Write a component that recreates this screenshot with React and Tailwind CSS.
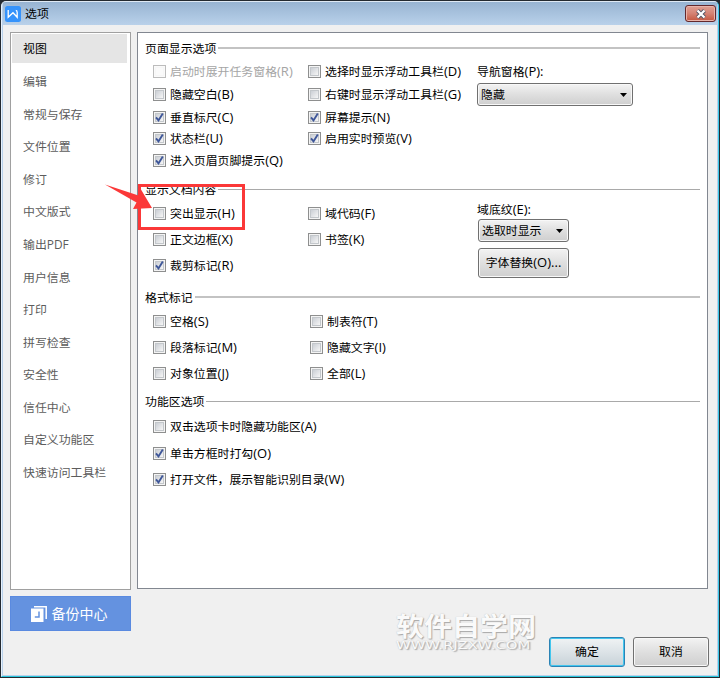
import React, { useState } from "react";

const MENU = [
    "视图", "编辑", "常规与保存", "文件位置", "修订", "中文版式", "输出PDF",
    "用户信息", "打印", "拼写检查", "安全性", "信任中心", "自定义功能区", "快速访问工具栏",
];

// splits "隐藏空白(B)" so the hotkey part can be a bit wider than the chinese text
function Label({ text }) {
    const i = text.indexOf("(");
    if (i < 0) return <span>{text}</span>;
    return (
        <span>
            {text.slice(0, i)}
            <span className="text-[13px]">{text.slice(i)}</span>
        </span>
    );
}

function Check({ text, on = false, disabled = false, className = "h-[26px]" }) {
    const [checked, setChecked] = useState(on);

    return (
        <div
            onClick={() => !disabled && setChecked(!checked)}
            className={`flex items-start gap-[4px] whitespace-nowrap ${disabled ? "text-[#a5a5a5]" : ""} ${className}`}
        >
            <span
                className={`w-[13px] h-[13px] shrink-0 border p-px ${disabled ? "border-[#bcbcbc] bg-[#fafafa]" : "border-[#8e8f8f] bg-[#f4f4f4]"}`}
            >
                <span
                    className={`block w-[9px] h-[9px] border ${disabled ? "border-[#f6f6f6]" : "border-[#c3c7cb] bg-linear-to-br from-[#cbcfd5] to-[#f6f6f6]"}`}
                >
                    {checked && (
                        <svg viewBox="0 0 9 9" className="w-[9px] h-[9px] -ml-px -mt-px overflow-visible">
                            <path d="M1 4.3 L3.5 7.4 L7.8 0.6" fill="none" stroke="#3f5799" strokeWidth="1.9" />
                        </svg>
                    )}
                </span>
            </span>
            <span className="leading-[13px]"><Label text={text} /></span>
        </div>
    );
}

function Section({ title, className, line = "h-px bg-[#a9a9a9]", children }) {
    return (
        <section className={className}>
            <div className="h-4 flex items-center gap-[2px]">
                <h2 className="leading-4 whitespace-nowrap">{title}</h2>
                <div className={`flex-1 ${line}`} />
            </div>
            {children}
        </section>
    );
}

function Dropdown({ value, className }) {
    return (
        <button className={`flex items-center justify-between h-[23px] pl-[3px] pr-[5px] border border-[#707070] rounded-[3px] bg-linear-to-b from-[#f3f3f3] from-0% via-[#dfdfdf] via-50% to-[#cfcfcf] shadow-[inset_0_0_0_1px_#f8f8f8] ${className}`}>
            <span>{value}</span>
            <svg width="7" height="4" viewBox="0 0 7 4"><path d="M0 0H7L3.5 4Z" fill="#000" /></svg>
        </button>
    );
}

export default function App() {
    const [active, setActive] = useState(0);

    return (
        <div className="relative w-[720px] h-[678px] bg-[#242a30] overflow-hidden text-[11.9px] text-black font-['Open_Sans','Noto_Sans_CJK_SC',sans-serif]">
            <div className="h-full p-px">
                <div className="h-full flex flex-col rounded-t-[5px] border border-t-[#dfe9f4] border-l-[#e7f2fd] border-r-[#3cc8e8] border-b-[#27c6dc] bg-[#b9d1ea] pl-px pb-px pr-px overflow-hidden">

                    {/* TITLE BAR */}
                    <div className="h-[23px] shrink-0 flex items-center pl-[2px] pr-px bg-linear-to-b from-[#98b4d2] to-[#b9d1ea]">
                        <svg width="16" height="16" viewBox="0 0 16 16">
                            <rect width="16" height="16" rx="2.5" fill="#3593fb" />
                            <path d="M3.2 4V11.3L8 6.7L12.2 11.3V6.5Q12.2 4.6 10.8 4.4" fill="none" stroke="#fff" strokeWidth="1.3" />
                        </svg>
                        <span className="ml-[4px] flex-1">选项</span>
                        <button className="w-[31px] h-[17px] flex items-center justify-center rounded-[3px] border border-[#63282c] bg-linear-to-b from-[#e0a093] from-0% via-[#d58475] via-48% to-[#c4563f] shadow-[inset_0_0_0_1px_#e9b4aa]">
                            <svg width="12" height="10" viewBox="0 0 12 10">
                                <path d="M2.5 1.5L9.5 8.5M9.5 1.5L2.5 8.5" stroke="#535666" strokeWidth="4" />
                                <path d="M2.5 1.5L9.5 8.5M9.5 1.5L2.5 8.5" stroke="#fff" strokeWidth="2.2" />
                            </svg>
                        </button>
                    </div>

                    <div className="flex-1 flex flex-col bg-[#f0f0f0] px-[7px] pt-[7px]">
                        <div className="flex items-start gap-[6px]">

                            {/* LEFT SIDE */}
                            <div className="w-[121px] shrink-0">
                                <nav className="h-[558px] border border-[#a0a0a0] bg-white pt-px px-px">
                                    {MENU.map((m, i) => (
                                        <div
                                            key={m}
                                            onClick={() => setActive(i)}
                                            className={`h-[32.6px] flex items-center pl-[11px] ${i === active ? "pr-1" : "pb-[2px] text-[#5c5c5c]"}`}
                                        >
                                            {i === active ? (
                                                <div className="-ml-[11px] pl-[11px] mb-[3px] -mr-[2px] flex-1 h-[29px] bg-[#e5e5e5] flex items-center">{m}</div>
                                            ) : m}
                                        </div>
                                    ))}
                                </nav>
                                <button className="mt-[6px] w-[121px] h-[35px] flex items-center justify-center gap-[5px] pr-[3px] bg-[#6492e0] border border-[#5a8ae0] text-white text-[14px]">
                                    <svg width="16" height="16" viewBox="0 0 16 16">
                                        <path d="M3 .8H15.2V13" fill="none" stroke="#fff" strokeWidth="1.5" />
                                        <path d="M0 2.5H12.5V16H0Z" fill="#fff" />
                                        <path d="M8 5.5V11H3.8" fill="none" stroke="#6492e0" strokeWidth="1.5" />
                                    </svg>
                                    备份中心
                                </button>
                            </div>

                            {/* OPTIONS PANEL */}
                            <main className="w-[571px] h-[557px] border border-[#828790] bg-white px-[7px] pt-[7px]">
                                <Section title="页面显示选项" className="h-[141px]" line="h-[2px] bg-[#c3c3c3]">
                                    <div className="flex pt-[9px] pl-2">
                                        <div className="w-[155px]">
                                            <Check text="启动时展开任务窗格(R)" disabled className="h-[23px]" />
                                            <Check text="隐藏空白(B)" className="h-[23px]" />
                                            <Check text="垂直标尺(C)" on className="h-[21px]" />
                                            <Check text="状态栏(U)" on className="h-[22px]" />
                                            <Check text="进入页眉页脚提示(Q)" on className="h-[21px]" />
                                        </div>
                                        <div className="w-[169px]">
                                            <Check text="选择时显示浮动工具栏(D)" className="h-[23px]" />
                                            <Check text="右键时显示浮动工具栏(G)" className="h-[23px]" />
                                            <Check text="屏幕提示(N)" on className="h-[21px]" />
                                            <Check text="启用实时预览(V)" on className="h-[21px]" />
                                        </div>
                                        <div>
                                            <div className="leading-[13px] mb-[5px]"><Label text="导航窗格(P):" /></div>
                                            <Dropdown value="隐藏" className="w-[156px]" />
                                        </div>
                                    </div>
                                </Section>

                                <Section title="显示文档内容" className="h-[108px]">
                                    <div className="flex pt-[10px] pl-2">
                                        <div className="w-[155px]">
                                            <Check text="突出显示(H)" />
                                            <Check text="正文边框(X)" />
                                            <Check text="裁剪标记(R)" on />
                                        </div>
                                        <div className="w-[169px]">
                                            <Check text="域代码(F)" />
                                            <Check text="书签(K)" />
                                        </div>
                                        <div className="-mt-[4px]">
                                            <div className="leading-[13px] mb-[3px]"><Label text="域底纹(E):" /></div>
                                            <Dropdown value="选取时显示" className="w-[91px] ml-px" />
                                            <button className="block mt-[6px] ml-px w-[91px] h-[30px] border border-[#707070] rounded-[3px] bg-linear-to-b from-[#f3f3f3] from-0% via-[#dfdfdf] via-50% to-[#cfcfcf] shadow-[inset_0_0_0_1px_#f8f8f8]">
                                                <Label text="字体替换(O)..." />
                                            </button>
                                        </div>
                                    </div>
                                </Section>

                                <Section title="格式标记" className="h-[104px]" line="h-[2px] bg-[#c3c3c3]">
                                    <div className="flex pt-[10px] pl-2">
                                        <div className="w-[157px]">
                                            <Check text="空格(S)" />
                                            <Check text="段落标记(M)" />
                                            <Check text="对象位置(J)" />
                                        </div>
                                        <div>
                                            <Check text="制表符(T)" />
                                            <Check text="隐藏文字(I)" />
                                            <Check text="全部(L)" />
                                        </div>
                                    </div>
                                </Section>

                                <Section title="功能区选项">
                                    <div className="pt-[11px] pl-2 font-['Open_Sans','Noto_Sans_CJK_SC',sans-serif]">
                                        <Check text="双击选项卡时隐藏功能区(A)" className="h-[27px]" />
                                        <Check text="单击方框时打勾(O)" on />
                                        <Check text="打开文件，展示智能识别目录(W)" on />
                                    </div>
                                </Section>
                            </main>
                        </div>

                        {/* BOTTOM BUTTONS */}
                        <div className="flex justify-end gap-2 mt-[6px] mr-px">
                            <button className="w-[76px] h-[30px] border border-[#2b83b5] rounded-[3px] bg-linear-to-b from-[#f0f3f4] from-0% via-[#dce3e7] via-50% to-[#c8d2d8] shadow-[inset_0_0_0_1px_#42c6ee]">确定</button>
                            <button className="w-[76px] h-[30px] border border-[#707070] rounded-[3px] bg-linear-to-b from-[#f3f3f3] from-0% via-[#dfdfdf] via-50% to-[#cfcfcf] shadow-[inset_0_0_0_1px_#f8f8f8]">取消</button>
                        </div>
                    </div>
                </div>
            </div>

            {/* red marker over the highlight option */}
            <div className="absolute left-[138px] top-[184px] w-[107px] h-[46px] border-[3px] border-[#fb3838]" />
            <svg className="absolute left-[100px] top-[180px]" width="60" height="36" viewBox="0 0 60 36">
                <path d="M5 4.5L38.5 15.5L41 9.5L52 28L33 29L36.5 22.5Z" fill="#fb3838" />
            </svg>

            {/* site watermark */}
            <div className="absolute left-[396px] top-[613px] w-[140px] text-[#fafafa] pointer-events-none [text-shadow:1px_1px_1px_#a8a8a8,0_0_1px_#bbb]">
                <div className="text-[28px] leading-[28px] h-[28px] font-bold whitespace-nowrap origin-top scale-y-[.93]">软件自学网</div>
                <div className="w-[94px] text-[10px] leading-[10px] whitespace-nowrap origin-left scale-x-[1.48] font-['DejaVu_Sans']">WWW.RJZXW.COM</div>
            </div>
        </div>
    );
}
